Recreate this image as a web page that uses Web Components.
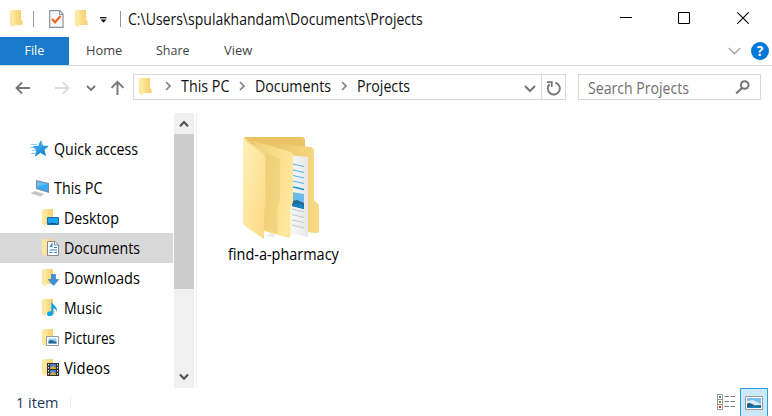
<!DOCTYPE html>
<html lang="en"><head><meta charset="utf-8"><title>Projects</title>
<style>html,body{margin:0;height:100%;overflow:hidden;background:#fff}body{font-family:"Open Sans","Noto Sans",sans-serif;color:#111}</style></head>
<body><explorer-window></explorer-window>
<script>
const svg=(w,h,b)=>`<svg width="${w}" height="${h}" viewBox="0 0 ${w} ${h}" fill="none">${b}</svg>`;
const fold=`<defs><linearGradient id="f" x2="1" y2="0"><stop stop-color="#ffeaa6"/><stop offset="1" stop-color="#f5ce68"/></linearGradient></defs><path d="M1 0H11V10L12.5 11V15H3V1Z" fill="url(#f)"/><path d="M0 0L4 2V15L3.500 17.500L0 15Z" fill="#ffe7a0"/>`;
const sub=b=>svg(18,18,fold+b);
const ICONS={
folder:svg(13,18,fold),
check:svg(15,18,`<path d="M.7.7H11L14 4V17.300H.7Z" fill="#f5f7f9" stroke="#8d9296" stroke-width="1.200"/><path d="M10.500 1V4.500H14" stroke="#8d9296"/><path d="M3 9L6 12.300L11.500 6" stroke="#f26322" stroke-width="2.200"/>`),
custom:svg(7,6,`<path d="M0 .7H6.500" stroke="#111" stroke-width="1.300"/><path d="M.5 2.500H6.500L3.500 5.700Z" fill="#111"/>`),
min:svg(12,12,`<path d="M0 5.500H12" stroke="#000"/>`),
max:svg(12,12,`<path d="M.5.5H11.500V11.500H.5Z" stroke="#000"/>`),
close:svg(12,12,`<path d="M.3.3L11.700 11.700M11.700.3L.3 11.700" stroke="#000" stroke-width="1.100"/>`),
ribbon:svg(13,8,`<path d="M.7 1L6.500 6.600L12.300 1" stroke="#aaa" stroke-width="1.500"/>`),
back:svg(16,14,`<path d="M15 7H1.500M7 1.500L1.500 7L7 12.500" stroke="#777" stroke-width="1.800"/>`),
fwd:svg(16,14,`<path d="M1 7H14.500M9 1.500L14.500 7L9 12.500" stroke="#dcdcdc" stroke-width="1.800"/>`),
recent:svg(10,7,`<path d="M1 1L5 5L9 1" stroke="#777" stroke-width="1.900"/>`),
up:svg(15,16,`<path d="M7.500 15V2M1.500 7.800L7.500 1.800L13.500 7.800" stroke="#777" stroke-width="1.900"/>`),
right:svg(7,10,`<path d="M1 1L5 5L1 9" stroke="#808080" stroke-width="1.700"/>`),
drop:svg(12,8,`<path d="M1 1L6 6L11 1" stroke="#777" stroke-width="2"/>`),
refresh:svg(15,15,`<path d="M9.300 1.700A6 6 0 1 1 3.600 3.200" stroke="#777" stroke-width="1.900"/><path d="M1 1.200H5.800V6" stroke="#777" stroke-width="1.700"/>`),
search:svg(15,15,`<circle cx="9.700" cy="5" r="3.800" stroke="#777" stroke-width="2"/><path d="M7 8L1.200 13.500" stroke="#777" stroke-width="2.200"/>`),
sup:svg(10,8,`<path d="M1 6.200L5 2L9 6.200" stroke="#555" stroke-width="2.200"/>`),
sdown:svg(10,8,`<path d="M1 1.500L5 5.700L9 1.500" stroke="#555" stroke-width="2.200"/>`),
star:svg(20,18,`<defs><linearGradient id="s" x2=".6" y2="1"><stop stop-color="#66cbf7"/><stop offset="1" stop-color="#0879ce"/></linearGradient></defs><path d="M1 4.500H7M0 7.500H5M2 10.500H7M1 13.500H6" stroke="#8fcdf3"/><path d="M10.800 1L12.600 6L18 6.300L14 9.800L15.600 15.500L10.500 12.500L5.500 16L6.900 10.500L3.500 6.600L8.500 6.300Z" fill="url(#s)" stroke="#188fdb" stroke-width=".8"/>`),
pc:svg(20,18,`<path d="M6 1L19 4V14L6 10Z" fill="#7f8d99"/><path d="M7 2.200L18 5V12.500L7 9.300Z" fill="#3aaaf2"/><path d="M7 2.200L18 5L7 7.500Z" fill="#64c1f7"/><path d="M0 14L5 12L14.500 15L10 17.700Z" fill="#d2d7dc"/><path d="M2 14L12 16.500M4 13L13 15.500" stroke="#a9b0b7" stroke-width=".6"/>`),
desktop:sub(`<path d="M5.500 8.500H16.500V15.500H5.500Z" fill="#19a4f5" stroke="#126fae"/><path d="M6 14.500H16" stroke="#094f83" stroke-dasharray="1 1 6 1"/>`),
documents:sub(`<path d="M5.500 2.500H13L16.500 6V16.500H5.500Z" fill="#fff" stroke="#858b90"/><path d="M12.500 2.500V6H16" stroke="#858b90"/><path d="M8 8L10 5V8.500M12 8.500H15M7.500 11H15M7.500 13.500H10.500M12 13.500H15" stroke="#2788c5" stroke-width="1.100"/>`),
downloads:sub(`<path d="M9.500 5.500H13.500V10.500H16.800L11.500 16.500L6.200 10.500H9.500Z" fill="#3d8fda" stroke="#2676bb" stroke-width=".6"/>`),
music:sub(`<path d="M9.300 2C10 6 16 6.500 14.700 13C14.500 10.500 12.500 9.600 11.300 9.500V14C11.300 17.800 5 18.300 5 15C5 12.500 7.800 12 9.300 12.500Z" fill="#08a2f5"/>`),
pictures:sub(`<path d="M4.500 7.500H16.500V16.500H4.500Z" fill="#fff" stroke="#9a9da0"/><path d="M6.500 9.500H14.500V14.500H6.500Z" fill="#8fcef5"/><path d="M6.500 12L9 11L14.500 13V14.500H6.500Z" fill="#23658f"/>`),
videos:sub(`<path d="M5 4H17V17H5Z" fill="#333"/><path d="M8 5H14V10H8ZM8 11H14V16H8Z" fill="#4d7fd1"/><path d="M8 9L11 6.500L14 9V10H8ZM8 15L11 12.500L14 15V16H8Z" fill="#d6a63d"/><path d="M6.500 5V17M15.500 5V17" stroke="#eee" stroke-dasharray="1.500 1.500"/>`),
details:svg(19,17,`<path d="M.5.500H5.500V5.500H.5ZM.5 5.500H5.500V10.500H.5ZM.5 10.500H5.500V15.500H.5Z" fill="#fff" stroke="#999"/><path d="M2 2H4V4H2Z" fill="#2681c7"/><path d="M2 7H4V9H2Z" fill="#7c8428"/><path d="M2 12H4V14H2Z" fill="#c43f28"/><path d="M7.500 2.500H12M13.500 2.500H18M7.500 7.500H12M13.500 7.500H18M7.500 12.500H12M13.500 12.500H18" stroke="#777"/>`),
thumbs:svg(18,14,`<path d="M.5.5H17.500V13.500H.5Z" fill="#fff" stroke="#999"/><path d="M2 2H16V12H2Z" fill="#78bef0"/><path d="M2 5L8 4L16 8V9H2Z" fill="#dceaf0"/><path d="M2 7.500L5 7L10 9.500L16 9V12H2Z" fill="#23627e"/><path d="M2 11L9 10L16 11V12H2Z" fill="#1680bd"/>`),
big:svg(78,104,`<defs><linearGradient id="a" x2="1" y2="1"><stop stop-color="#fff0b8"/><stop offset="1" stop-color="#fbd982"/></linearGradient><linearGradient id="b"><stop stop-color="#e6c263"/><stop offset="1" stop-color="#f8da85"/></linearGradient><linearGradient id="c" x2="1" y2=".3"><stop stop-color="#edcf75"/><stop offset=".55" stop-color="#f8dc89"/><stop offset="1" stop-color="#ffe79c"/></linearGradient><linearGradient id="p"><stop stop-color="#fff"/><stop offset="1" stop-color="#e7e7e8"/></linearGradient></defs>
<path d="M1 0H59Q62 0 62 4V12H10Z" fill="#e9c365"/><path d="M20 98L23 99L32 94V101Z" fill="#eee"/>
<path d="M24 6L68 10Q71 11 71 14V63L76 68V94Q76 96 73 96L30 92Z" fill="url(#b)"/>
<path d="M44 18L65 20V100L40 95Z" fill="url(#p)"/><path d="M50 27L61 29.500M50 33L61 35.500M50 38.500L61 41M50 44L61 46.500" stroke="#55b3df"/><path d="M50 50L61 52.500" stroke="#1894cc" stroke-width="1.700"/>
<path d="M49 55L61 57V72L49 69Z" fill="#6dbbec"/><path d="M49 64L54 63L61 66V72L49 69Z" fill="#226b98"/><path d="M49 68L56 66.500L61 69V72L49 69Z" fill="#1780ba"/>
<path d="M49 72L61 75M49 77.500L61 80.500M49 83L61 85.500M49 88L61 91" stroke="#bcc0c3" stroke-width=".9"/>
<path d="M11 4L48 15Q50 16 50 19V65L47.500 71V98L46 101L21 94Z" fill="url(#c)"/><path d="M22 16L37 22V64L34.500 70V97L21 93Z" fill="#e2c063" opacity=".35"/>
<path d="M0 0L19 15Q23 18 23 21V68L21 73V102L2 89Q0 87 0 85Z" fill="url(#a)"/><path d="M1 2L20 17Q22.500 19 22.500 22V68" stroke="#f3d27a" stroke-width=".8"/>`)
};
const define=(name,html,ready)=>customElements.define(name,class extends HTMLElement{connectedCallback(){if(this.shadowRoot)return;const r=this.attachShadow({mode:'open'});r.innerHTML=typeof html==='function'?html(this):html;if(ready)ready(this,r)}});

define('x-icon',e=>`<style>:host{display:block;flex:none}svg{display:block}</style>${ICONS[e.getAttribute('name')]}`);
/* A single line of text condensed or widened to the width given in "w". */
define('fit-text',e=>`<style>:host{display:block;flex:none;width:${e.getAttribute('w')}px;line-height:22px;height:22px;white-space:nowrap}span{display:inline-block;transform-origin:0 50%}</style><span>${e.getAttribute('text')}</span>`,(e,r)=>{const s=r.querySelector('span');s.style.transform=`scaleX(${e.getAttribute('w')/s.offsetWidth})`});

define('title-bar',`<style>:host{display:flex;height:37px;align-items:center;padding-left:10px;box-sizing:border-box;font-size:15.500px}i{width:1px;height:16px;background:#999}.win{margin:0 23px 2px auto;display:flex}</style>
<x-icon name="folder"></x-icon><i style="margin:0 15px 0 10px"></i><x-icon name="check"></x-icon><x-icon name="folder" style="margin:0 12px 0 11px"></x-icon><x-icon name="custom" style="margin-top:3px"></x-icon><i style="margin:0 7px 0 13px"></i><fit-text w="295" text="C:\\Users\\spulakhandam\\Documents\\Projects"></fit-text>
<div class="win"><x-icon name="min"></x-icon><x-icon name="max" style="margin:0 47px 0 46px"></x-icon><x-icon name="close"></x-icon></div>`);
define('ribbon-tabs',`<style>:host{display:flex;height:29px;box-sizing:border-box;border-bottom:1px solid #dadbdc;align-items:center;font-size:12.500px;color:#444}.file{width:69px;height:28px;background:#1979ca;color:#fff;display:grid;place-items:center}b{width:18px;height:18px;border-radius:50%;background:#0078d7;color:#fff;font-size:14px;line-height:18px;text-align:center;margin:0 3px 0 10px}</style>
<div class="file"><fit-text w="20" text="File"></fit-text></div><fit-text w="36" text="Home" style="margin-left:17px"></fit-text><fit-text w="34" text="Share" style="margin-left:34px"></fit-text><fit-text w="28" text="View" style="margin-left:34px"></fit-text><x-icon name="ribbon" style="margin-left:auto"></x-icon><b>?</b>`);
define('address-bar',`<style>:host{display:flex;height:26px;align-items:center;font-size:15.500px;padding:0 10px 0 15px}.box{height:24px;border:1px solid #d9d9d9;display:flex;align-items:center}.path{width:431px}.path fit-text{margin-top:-2px}.re{border-left:1px solid #d9d9d9;height:24px;width:23px;display:grid;place-items:center;margin-left:5px}.search{width:181px;margin-left:12px;color:#707070}</style>
<x-icon name="back" style="margin-top:2px"></x-icon><x-icon name="fwd" style="margin:2px 0 0 23px"></x-icon><x-icon name="recent" style="margin:2px 0 0 16px"></x-icon><x-icon name="up" style="margin:2px 8px 0 14px"></x-icon>
<div class="box path"><x-icon name="folder" style="margin-left:5px"></x-icon><x-icon name="right" style="margin:-2px 9px 0 13px"></x-icon><fit-text w="48" text="This PC"></fit-text><x-icon name="right" style="margin:-2px 9px 0 10px"></x-icon><fit-text w="76" text="Documents"></fit-text><x-icon name="right" style="margin:-2px 9px 0 10px"></x-icon><fit-text w="53" text="Projects"></fit-text><x-icon name="drop" style="margin:4px 0 0 auto"></x-icon><div class="re"><x-icon name="refresh" style="margin-top:2px"></x-icon></div></div>
<div class="box search"><fit-text w="101" text="Search Projects" style="margin:1px 0 0 9px"></fit-text><x-icon name="search" style="margin:0 10px 0 auto"></x-icon></div>`);
define('nav-item',e=>`<style>:host{display:flex;height:30px;box-sizing:border-box;align-items:center;gap:4px;padding-left:42px;font-size:15.500px;color:#000}:host([root]){padding-left:30px}:host([selected]){background:#d9d9d9}</style><x-icon name="${e.getAttribute('icon')}"></x-icon><fit-text w="${e.getAttribute('w')}" text="${e.getAttribute('label')}"></fit-text>`);
define('scroll-bar',`<style>:host{display:flex;flex-direction:column;align-items:center;width:20px;height:275px;background:#f0f0f0}.t{width:20px;height:155px;background:#cdcdcd;margin-bottom:auto}</style><x-icon name="sup" style="margin:7px 0 6px"></x-icon><div class="t"></div><x-icon name="sdown" style="margin-bottom:7px"></x-icon>`);
define('nav-pane',`<style>:host{display:flex;height:275px;border-right:1px solid #f0f0f0;width:196px}nav{width:173px;margin-right:1px;padding-top:21px;box-sizing:border-box}</style>
<nav><nav-item root icon="star" w="84" label="Quick access" style="margin-bottom:9px"></nav-item><nav-item root icon="pc" w="48" label="This PC"></nav-item><nav-item icon="desktop" w="55" label="Desktop"></nav-item><nav-item selected icon="documents" w="76" label="Documents"></nav-item><nav-item icon="downloads" w="76" label="Downloads"></nav-item><nav-item icon="music" w="38" label="Music"></nav-item><nav-item icon="pictures" w="51" label="Pictures"></nav-item><nav-item icon="videos" w="46" label="Videos"></nav-item></nav><scroll-bar></scroll-bar>`);
define('folder-tile',`<style>:host{display:flex;flex-direction:column;align-items:center;width:112px;gap:2px;font-size:15.500px;color:#000}</style><x-icon name="big" style="margin-right:2px"></x-icon><fit-text w="111" text="find-a-pharmacy"></fit-text>`);
define('status-bar',`<style>:host{display:flex;height:28px;align-items:center;font-size:14.500px;color:#1e395b;padding:0 4px 0 16px}i{width:1px;height:14px;background:#eee;margin-left:12px}.on{width:26px;height:27px;background:#cce8f6;border:1px solid #26a0da;border-bottom:0;display:grid;place-items:center;margin-left:4px}</style><fit-text w="42" text="1 item" style="margin-top:2px"></fit-text><i></i><x-icon name="details" style="margin:1px 0 0 auto"></x-icon><div class="on"><x-icon name="thumbs"></x-icon></div>`);
define('explorer-window',`<style>:host{display:flex;flex-direction:column;width:772px;height:416px;background:#fff}.main{display:flex;height:275px}</style>
<title-bar></title-bar><ribbon-tabs></ribbon-tabs><address-bar style="margin:8px 0 13px"></address-bar><div class="main"><nav-pane></nav-pane><folder-tile style="margin:24px 0 0 30px"></folder-tile></div><status-bar></status-bar>`);
</script></body></html>
